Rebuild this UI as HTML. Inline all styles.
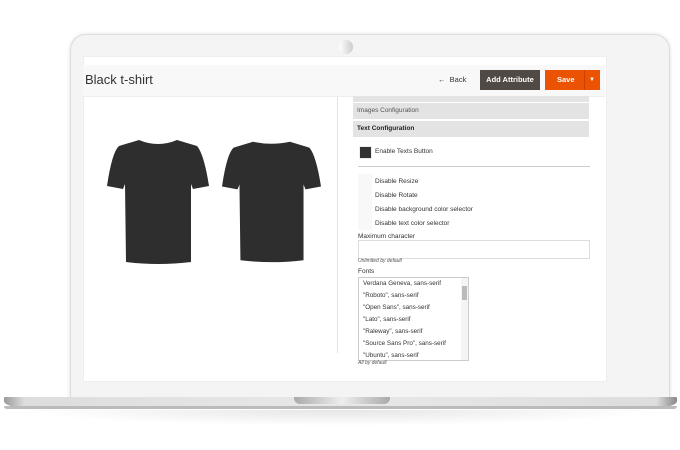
<!DOCTYPE html>
<html><head><style>
body{margin:0;width:680px;height:450px;background:#fff;position:relative;overflow:hidden;font-family:"Liberation Sans",sans-serif;}
.a{position:absolute}
.t{font-size:6.5px;color:#333}
</style></head><body>
<div class="a" style="left:70px;top:34px;width:598px;height:366px;background:#f4f4f4;border:1px solid #ddd;border-radius:16px 16px 0 0;box-shadow:0 0 4px rgba(0,0,0,.12)"></div>
<div class="a" style="left:339px;top:40px;width:14px;height:14px;border-radius:50%;background:linear-gradient(90deg,#fff,#ccc)"></div>
<div class="a" style="left:83px;top:56px;width:522px;height:324px;background:#fff;border:1px solid #eee"></div>
<div class="a" style="left:83px;top:65px;width:522px;height:31px;background:#f8f8f8;border-bottom:1px solid #eee"></div>
<div class="a" style="left:85px;top:72px;font-size:13px;color:#333">Black t-shirt</div>
<div class="a" style="left:438px;top:75px;font-size:7.5px;color:#333">←&nbsp; Back</div>
<div class="a" style="left:480px;top:70px;width:60px;height:20px;background:#514943;color:#fff;font-size:7.5px;font-weight:bold;text-align:center;line-height:20px">Add Attribute</div>
<div class="a" style="left:545px;top:70px;width:55px;height:20px;background:#eb5202;color:#fff;font-size:7.5px;font-weight:bold;line-height:20px"><span style="margin-left:12px">Save</span><span style="position:absolute;left:39px;top:0;width:1px;height:20px;background:#c94202"></span><span style="position:absolute;left:44px;font-size:6px">▼</span></div>
<svg class="a" style="left:107px;top:138px" width="102" height="127" viewBox="0 0 102 127"><path d="M32 2 Q51 10 70 2 L90 8 Q97 16 102 48 L86 51 L84 46 L84 124 Q51 128 19 124 L18 46 L16 51 L0 48 Q5 14 12 8 Z" fill="#2e2e2e"/></svg>
<svg class="a" style="left:222px;top:138px" width="99" height="127" viewBox="0 0 102 127"><path d="M32 2 Q51 6 70 2 L90 8 Q97 16 102 48 L86 51 L84 46 L84 124 Q51 128 19 124 L18 46 L16 51 L0 48 Q5 14 12 8 Z" fill="#2e2e2e"/></svg>
<div class="a" style="left:337px;top:97px;width:1px;height:256px;background:#e3e3e3"></div>
<div class="a" style="left:353px;top:96px;width:236px;height:6px;background:#e3e3e3"></div>
<div class="a t" style="left:353px;top:103px;width:232px;height:16px;background:#e3e3e3;line-height:16px;padding-left:4px;color:#555">Images Configuration</div>
<div class="a t" style="left:353px;top:121px;width:232px;height:16px;background:#e3e3e3;line-height:16px;padding-left:4px;font-weight:bold;color:#222">Text Configuration</div>
<div class="a" style="left:359px;top:146px;width:11px;height:11px;background:#333;border:1px solid #eee"></div>
<div class="a t" style="left:375px;top:148px">Enable Texts Button</div>
<div class="a" style="left:358px;top:166px;width:232px;height:1px;background:#ccc"></div>
<div class="a" style="left:358px;top:174px;width:14px;height:56px;background:#f8f8f8"></div>
<div class="a t" style="left:375px;top:178px">Disable Resize</div>
<div class="a t" style="left:375px;top:192px">Disable Rotate</div>
<div class="a t" style="left:375px;top:206px">Disable background color selector</div>
<div class="a t" style="left:375px;top:220px">Disable text color selector</div>
<div class="a t" style="left:358px;top:233px">Maximum character</div>
<div class="a" style="left:358px;top:240px;width:230px;height:17px;border:1px solid #ddd"></div>
<div class="a" style="left:358px;top:258px;font-size:5px;font-style:italic;color:#555">Unlimited by default</div>
<div class="a t" style="left:358px;top:268px">Fonts</div>
<div class="a" style="left:358px;top:277px;width:109px;height:82px;border:1px solid #ccc;overflow:hidden">
<div class="t" style="position:absolute;left:4px;top:0px;line-height:12px;font-size:6.3px">Verdana Geneva, sans-serif<br>"Roboto", sans-serif<br>"Open Sans", sans-serif<br>"Lato", sans-serif<br>"Raleway", sans-serif<br>"Source Sans Pro", sans-serif<br>"Ubuntu", sans-serif</div>
<div style="position:absolute;right:0;top:0;width:7px;height:82px;background:#f4f4f4"></div>
<div style="position:absolute;right:1px;top:8px;width:5px;height:14px;background:#bbb"></div>
</div>
<div class="a" style="left:358px;top:360px;font-size:5px;font-style:italic;color:#555">All by default</div>
<div class="a" style="left:4px;top:397px;width:673px;height:12px;background:linear-gradient(90deg,#999,#ddd 3%,#e8e8e8 50%,#ddd 97%,#888);border-radius:1px 1px 30px 30px / 1px 1px 8px 8px"></div>
<div class="a" style="left:4px;top:406px;width:673px;height:3px;background:#bbb;border-radius:0 0 30px 30px"></div>
<div class="a" style="left:294px;top:397px;width:96px;height:7px;background:linear-gradient(90deg,#aaa,#eee,#aaa);border-radius:0 0 6px 6px"></div>
<div class="a" style="left:20px;top:410px;width:640px;height:16px;background:radial-gradient(ellipse at top,rgba(0,0,0,.1),rgba(0,0,0,0) 70%)"></div>
</body></html>
